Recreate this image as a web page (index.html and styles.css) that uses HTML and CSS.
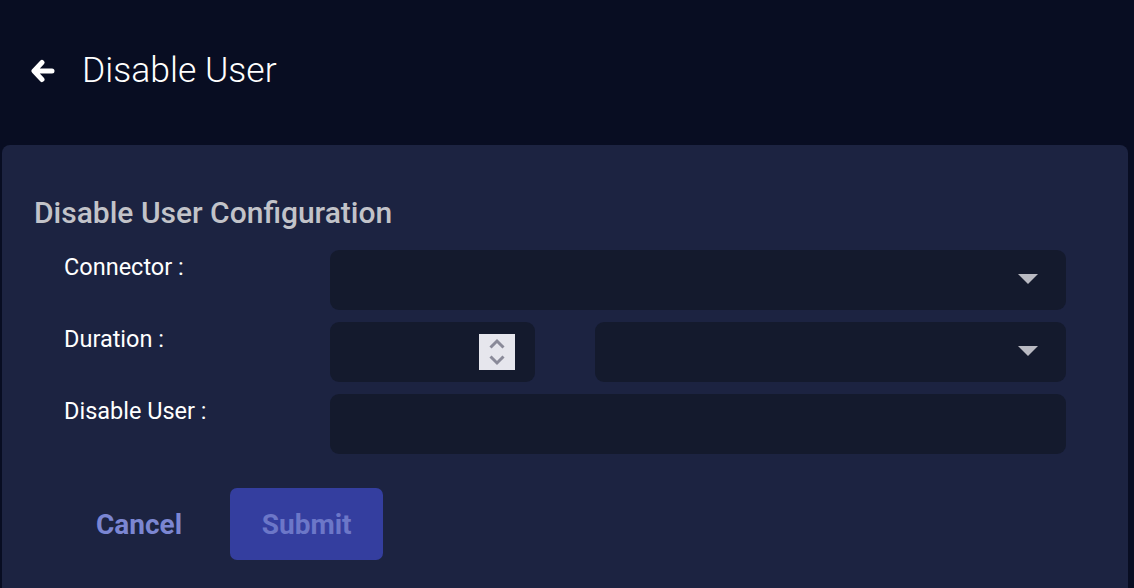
FILE: index.html
```html
<!DOCTYPE html>
<html>
<head>
<meta charset="utf-8">
<link rel="stylesheet" href="styles.css">
</head>
<body>
<header class="topbar">
  <svg class="back" width="24" height="24" viewBox="0 0 24 24"><path d="M11 3.5 L3 12 L11 20.5 M3.5 12 H21" fill="none" stroke="#fff" stroke-width="5" stroke-linecap="round" stroke-linejoin="round"/></svg>
  <h1 class="title">Disable User</h1>
</header>
<main class="card">
  <h2 class="card-title">Disable User Configuration</h2>
  <div class="form">
    <label class="label">Connector :</label>
    <div class="field select"><span class="caret"></span></div>

    <label class="label">Duration :</label>
    <div class="duo">
      <div class="field number">
        <span class="spinner">
          <svg width="36" height="36" viewBox="0 0 36 36"><path d="M11.5 13.5 L18 7 L24.5 13.5 M11.5 22.5 L18 29 L24.5 22.5" fill="none" stroke="#8a8a99" stroke-width="3"/></svg>
        </span>
      </div>
      <div class="field select"><span class="caret"></span></div>
    </div>

    <label class="label">Disable User :</label>
    <div class="field"></div>
  </div>
  <div class="actions">
    <button class="btn-cancel">Cancel</button>
    <button class="btn-submit">Submit</button>
  </div>
</main>
</body>
</html>
```
FILE: styles.css
```css
* { box-sizing: border-box; }
html, body { margin: 0; padding: 0; height: 100%; }
body {
  background: #080d22;
  font-family: Roboto, "Liberation Sans", sans-serif;
  color: #fff;
  display: flex;
  flex-direction: column;
  overflow: hidden;
}
.topbar {
  height: 145px;
  display: flex;
  align-items: center;
  padding-left: 31px;
  padding-bottom: 6px;
}
.back { margin-top: 2px; }
.title {
  margin: 0 0 0 27px;
  font-weight: 300;
  font-size: 35.5px;
  color: #fff;
}
.card {
  flex: 1;
  margin: 0 6px 0 2px;
  background: #1c2341;
  border-radius: 8px 8px 0 0;
  padding: 50px 0 0 32px;
}
.card-title {
  margin: 0 0 20px 0;
  font-size: 30px;
  line-height: 35px;
  font-weight: 500;
  color: #c2c3c9;
}
.form {
  display: grid;
  grid-template-columns: 266px 736px;
  row-gap: 12px;
  padding-left: 30px;
}
.label {
  font-size: 23.5px;
  line-height: 28px;
  padding-top: 3px;
  color: #fff;
}
.field {
  height: 60px;
  background: #141a2d;
  border-radius: 9px;
  position: relative;
}
.duo {
  display: grid;
  grid-template-columns: 205px 471px;
  column-gap: 60px;
}
.caret {
  position: absolute;
  right: 28px;
  top: 24px;
  width: 0; height: 0;
  border-left: 10px solid transparent;
  border-right: 10px solid transparent;
  border-top: 10px solid #b9bac2;
}
.number { display: flex; align-items: center; justify-content: flex-end; padding-right: 20px; }
.spinner {
  width: 36px; height: 36px;
  background: #e6e6ed;
  display: flex;
}
.actions {
  display: flex;
  align-items: center;
  gap: 48px;
  margin-top: 34px;
  padding-left: 62px;
}
.actions button {
  font-family: Roboto, "Liberation Sans", sans-serif;
  font-size: 28px;
  font-weight: 700;
  border: none;
  cursor: pointer;
}
.btn-cancel {
  background: transparent;
  color: #7b86d2;
  padding: 0;
  height: 72px;
}
.btn-submit {
  background: #343e9f;
  color: #6c77c8;
  width: 153px;
  height: 72px;
  border-radius: 7px;
  padding: 0;
}
```
